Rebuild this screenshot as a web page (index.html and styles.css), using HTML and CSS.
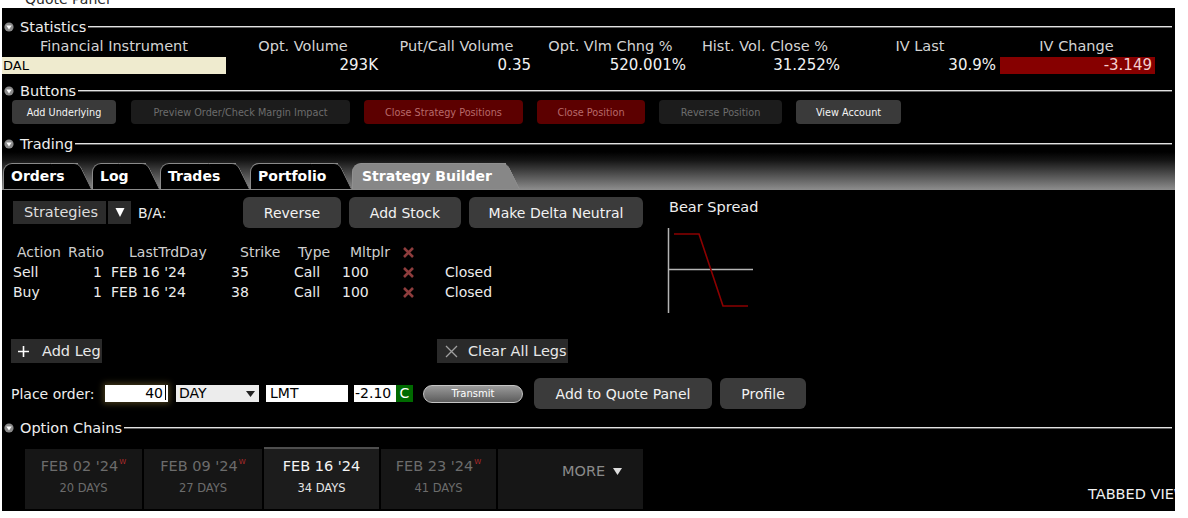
FILE: index.html
```html
<!DOCTYPE html>
<html>
<head>
<meta charset="utf-8">
<title>Quote Panel</title>
<link rel="stylesheet" href="styles.css">
</head>
<body>
<div class="title-strip"><span>Quote Panel</span></div>
<div class="panel">
  <div class="sec-head h-stats">
    <svg class="tri" viewBox="0 0 10 10"><circle cx="5" cy="5" r="4.6" fill="#8a8a8a"/><path d="M2.3 3.4H7.7L5 7.4Z" fill="#fff"/></svg>
    <span class="lbl">Statistics</span><div class="rule"></div>
  </div>
  <div class="stats">
    <div class="sh">Financial Instrument</div>
    <div class="sh">Opt. Volume</div>
    <div class="sh">Put/Call Volume</div>
    <div class="sh">Opt. Vlm Chng %</div>
    <div class="sh">Hist. Vol. Close %</div>
    <div class="sh">IV Last</div>
    <div class="sh">IV Change</div>
    <div class="sv sym">DAL</div>
    <div class="sv">293K</div>
    <div class="sv">0.35</div>
    <div class="sv">520.001%</div>
    <div class="sv">31.252%</div>
    <div class="sv">30.9%</div>
    <div class="sv neg">-3.149</div>
  </div>

  <div class="sec-head h-buttons">
    <svg class="tri" viewBox="0 0 10 10"><circle cx="5" cy="5" r="4.6" fill="#8a8a8a"/><path d="M2.3 3.4H7.7L5 7.4Z" fill="#fff"/></svg>
    <span class="lbl">Buttons</span><div class="rule"></div>
  </div>
  <div class="btnrow">
    <div class="abtn on b1">Add Underlying</div>
    <div class="abtn off b2">Preview Order/Check Margin Impact</div>
    <div class="abtn red b3">Close Strategy Positions</div>
    <div class="abtn red b4">Close Position</div>
    <div class="abtn off b5">Reverse Position</div>
    <div class="abtn on b6">View Account</div>
  </div>

  <div class="sec-head h-trading">
    <svg class="tri" viewBox="0 0 10 10"><circle cx="5" cy="5" r="4.6" fill="#8a8a8a"/><path d="M2.3 3.4H7.7L5 7.4Z" fill="#fff"/></svg>
    <span class="lbl">Trading</span><div class="rule"></div>
  </div>
  <div class="tabstrip">
    <div class="tab t1">Orders</div>
    <div class="tab t2">Log</div>
    <div class="tab t3">Trades</div>
    <div class="tab t4">Portfolio</div>
    <div class="tab t5 active">Strategy Builder</div>
  </div>

  <div class="sb-body">
    <div class="sb-left">
      <div class="toolbar">
        <div class="strat">Strategies</div>
        <div class="dd"><svg width="10" height="11" viewBox="0 0 10 11"><path d="M0.5 1H9.5L5 10Z" fill="#fff"/></svg></div>
        <div class="ba">B/A:</div>
        <div class="sbtn w-rev">Reverse</div>
        <div class="sbtn w-stock">Add Stock</div>
        <div class="sbtn w-delta">Make Delta Neutral</div>
      </div>
      <div class="legs">
        <div class="h c1">Action</div>
        <div class="h c2">Ratio</div>
        <div class="h c3">LastTrdDay</div>
        <div class="h c4">Strike</div>
        <div class="h c5">Type</div>
        <div class="h c6">Mltplr</div>
        <div class="h c7"><svg class="xr" viewBox="0 0 11 11"><path d="M1 1L10 10M10 1L1 10" stroke="#8e3d3d" stroke-width="2.6"/></svg></div>
        <div class="h c8"></div>

        <div class="v c1">Sell</div>
        <div class="v c2">1</div>
        <div class="v c3">FEB 16 '24</div>
        <div class="v c4">35</div>
        <div class="v c5">Call</div>
        <div class="v c6">100</div>
        <div class="v c7"><svg class="xr" viewBox="0 0 11 11"><path d="M1 1L10 10M10 1L1 10" stroke="#8e3d3d" stroke-width="2.6"/></svg></div>
        <div class="v c8">Closed</div>

        <div class="v c1">Buy</div>
        <div class="v c2">1</div>
        <div class="v c3">FEB 16 '24</div>
        <div class="v c4">38</div>
        <div class="v c5">Call</div>
        <div class="v c6">100</div>
        <div class="v c7"><svg class="xr" viewBox="0 0 11 11"><path d="M1 1L10 10M10 1L1 10" stroke="#8e3d3d" stroke-width="2.6"/></svg></div>
        <div class="v c8">Closed</div>
      </div>
    </div>
    <div class="sb-right">
      <div class="spread-name">Bear Spread</div>
      <svg class="graph" width="90" height="87" viewBox="0 0 90 87">
        <path d="M2.5 1V86" stroke="#b4b4b4" stroke-width="1.5" fill="none"/>
        <path d="M2 42.5H87" stroke="#b4b4b4" stroke-width="1.5" fill="none"/>
        <path d="M8 7H33L57 79H82" stroke="#8c0000" stroke-width="1.6" fill="none"/>
      </svg>
    </div>
  </div>

  <div class="legbar">
    <div class="addleg"><svg width="11" height="11" viewBox="0 0 11 11"><path d="M5.5 0V11M0 5.5H11" stroke="#fff" stroke-width="1.6"/></svg><span>Add Leg</span></div>
    <div class="clearlegs"><svg width="13" height="13" viewBox="0 0 13 13"><path d="M1 1L12 12M12 1L1 12" stroke="#a0a0a0" stroke-width="1.3"/></svg><span>Clear All Legs</span></div>
  </div>

  <div class="po">
    <div class="po-lbl">Place order:</div>
    <div class="inp qty">40<span class="caret"></span></div>
    <div class="inp day"><span>DAY</span><svg width="9" height="6" viewBox="0 0 9 6"><path d="M0 0H9L4.5 6Z" fill="#222"/></svg></div>
    <div class="inp lmt">LMT</div>
    <div class="inp px">-2.10</div>
    <div class="cbox">C</div>
    <div class="transmit">Transmit</div>
    <div class="sbtn w-aqp">Add to Quote Panel</div>
    <div class="sbtn w-prof">Profile</div>
  </div>

  <div class="sec-head h-chains">
    <svg class="tri" viewBox="0 0 10 10"><circle cx="5" cy="5" r="4.6" fill="#8a8a8a"/><path d="M2.3 3.4H7.7L5 7.4Z" fill="#fff"/></svg>
    <span class="lbl">Option Chains</span><div class="rule"></div>
  </div>
  <div class="chains">
    <div class="ct ct1"><div class="d">FEB 02 '24<sup>W</sup></div><div class="n">20 DAYS</div></div>
    <div class="ct ct2"><div class="d">FEB 09 '24<sup>W</sup></div><div class="n">27 DAYS</div></div>
    <div class="ct ct3 sel"><div class="d">FEB 16 '24</div><div class="n">34 DAYS</div></div>
    <div class="ct ct4"><div class="d">FEB 23 '24<sup>W</sup></div><div class="n">41 DAYS</div></div>
    <div class="ct more"><div class="mo">MORE <svg width="9" height="7" viewBox="0 0 9 7"><path d="M0 0H9L4.5 7Z" fill="#ddd"/></svg></div></div>
    <div class="tabbed">TABBED VIEW</div>
  </div>
</div>
</body>
</html>
```

FILE: styles.css
```css
* { box-sizing: border-box; }
html, body { margin: 0; padding: 0; background: #fff; }
body {
  font-family: "DejaVu Sans", Verdana, sans-serif;
  width: 1188px;
  height: 518px;
  overflow: hidden;
}
.title-strip { height: 8px; overflow: hidden; }
.title-strip span {
  display: block;
  margin-top: -8px;
  padding-left: 25px;
  font-size: 14px;
  line-height: 14px;
  color: #2a2a2a;
}
.panel {
  margin-left: 2px;
  width: 1173px;
  height: 503px;
  background: #000;
  overflow: hidden;
  color: #e8e8e8;
}

/* section headers */
.sec-head {
  display: flex;
  align-items: center;
  height: 16px;
  line-height: 16px;
  font-size: 14.5px;
  color: #eee;
}
.sec-head .tri { width: 10px; height: 10px; margin-left: 2px; flex: none; }
.sec-head .lbl { margin-left: 6px; white-space: nowrap; }
.sec-head .rule {
  flex: 1;
  height: 2px;
  margin: 0 3px 1px 2px;
  border-top: 1px solid #e2e2e2;
  border-bottom: 1px solid #5e5e5e;
}
.h-stats { margin-top: 11px; }
.h-buttons { margin-top: 9px; }
.h-trading { margin-top: 12px; }
.h-chains { margin-top: 11px; }

/* statistics */
.stats {
  display: grid;
  grid-template-columns: 224px 154px 153px 155px 154px 156px 157px;
  grid-template-rows: 17px 17px;
  row-gap: 2px;
  margin-top: 3px;
}
.stats .sh {
  text-align: center;
  font-size: 14.5px;
  line-height: 17px;
  color: #d4d4d4;
  white-space: nowrap;
}
.stats .sv {
  text-align: right;
  padding-right: 2px;
  font-size: 15px;
  line-height: 17px;
  color: #f2f2f2;
}
.stats .sym {
  text-align: left;
  padding-left: 1px;
  background: #efebcf;
  color: #000;
  font-size: 13px;
}
.stats .neg {
  margin-left: 2px;
  padding-right: 3px;
  background: #860000;
  color: #f4d0d0;
}

/* button row */
.btnrow {
  display: flex;
  height: 24px;
  margin-top: 1px;
  padding-left: 10px;
}
.abtn {
  height: 24px;
  border-radius: 4px;
  font-size: 9.7px;
  display: flex;
  align-items: center;
  justify-content: center;
  white-space: nowrap;
  margin-right: 14px;
  flex: none;
}
.abtn.on { background: #3a3a3a; color: #f4f4f4; }
.abtn.off { background: #1c1c1c; color: #6c6c6c; }
.abtn.red { background: #5c0000; color: #b86a6a; }
.b1 { width: 104px; margin-right: 15px; }
.b2 { width: 219px; }
.b3 { width: 159px; }
.b4 { width: 108px; }
.b5 { width: 123px; }
.b6 { width: 105px; }

/* tabs */
.tabstrip {
  height: 38px;
  display: flex;
  align-items: flex-end;
  padding-left: 1px;
  background: linear-gradient(#000 0%, #141414 22%, #8a8a8a 100%);
  border-bottom: 1px solid #8c8c8c;
}
.tab {
  position: relative;
  z-index: 1;
  flex: none;
  height: 26px;
  line-height: 26px;
  padding-left: 8px;
  font-size: 14px;
  font-weight: bold;
  color: #fff;
  white-space: nowrap;
}
.tab::before {
  content: "";
  position: absolute;
  left: 0; top: 0; bottom: 0; right: 14px;
  background: #000;
  border-top: 1px solid #8a8a8a;
  border-left: 1px solid #8a8a8a;
  border-top-left-radius: 9px;
  z-index: -1;
}
.tab::after {
  content: "";
  position: absolute;
  right: 0; top: 0; bottom: 0;
  width: 28px;
  background: #000;
  border-top: 1px solid #8a8a8a;
  border-right: 1px solid #8a8a8a;
  border-top-right-radius: 6px;
  transform: skewX(26deg);
  transform-origin: 100% 100%;
  z-index: -1;
}
.tab.active::before, .tab.active::after { background: #878787; border-color: #909090; }
.t1 { width: 89px; }
.t2 { width: 68px; }
.t3 { width: 90px; }
.t4 { width: 102px; }
.t5 { width: 168px; padding-left: 10px; }

/* strategy builder */
.sb-body { display: flex; }
.sb-left { width: 667px; flex: none; }
.toolbar {
  display: flex;
  align-items: center;
  height: 31px;
  margin-top: 7px;
  padding-left: 11px;
}
.strat {
  width: 93px;
  height: 23px;
  line-height: 23px;
  padding-left: 11px;
  background: #2c2c2c;
  font-size: 14.5px;
  color: #dedede;
}
.dd {
  width: 23px;
  height: 23px;
  margin-left: 2px;
  background: #2c2c2c;
  display: flex;
  align-items: center;
  justify-content: center;
}
.ba { width: 112px; padding-left: 7px; font-size: 14px; color: #eee; }
.sbtn {
  height: 31px;
  border-radius: 6px;
  background: #3b3b3b;
  color: #f2f2f2;
  font-size: 14px;
  display: flex;
  align-items: center;
  justify-content: center;
  white-space: nowrap;
  flex: none;
}
.w-rev { width: 98px; }
.w-stock { width: 112px; margin-left: 8px; }
.w-delta { width: 174px; margin-left: 8px; }

.legs {
  display: grid;
  grid-template-columns: 49px 43px 125px 60px 50px 60px 30px 120px;
  grid-auto-rows: 20px;
  margin-top: 14px;
  margin-left: 11px;
  font-size: 14px;
  line-height: 20px;
  white-space: nowrap;
}
.legs .h { color: #cfcfcf; }
.legs .v { color: #ececec; }
.legs .c2 { text-align: right; }
.legs .h.c1 { padding-left: 4px; }
.legs .h.c2 { padding-right: 1px; }
.legs .h.c3 { padding-left: 24px; }
.legs .h.c4 { padding-left: 10px; }
.legs .h.c5 { padding-left: 8px; }
.legs .h.c6 { padding-left: 10px; }
.legs .v.c2 { padding-right: 3px; }
.legs .v.c3 { padding-left: 6px; }
.legs .v.c4 { padding-left: 1px; }
.legs .v.c5 { padding-left: 4px; }
.legs .v.c6 { padding-left: 2px; }
.legs .c7 { padding-left: 3px; display: flex; align-items: center; }
.legs .v.c8 { padding-left: 15px; }
.xr { width: 11px; height: 11px; }

.spread-name {
  margin-top: 8px;
  height: 18px;
  line-height: 18px;
  font-size: 14.5px;
  color: #eee;
  white-space: nowrap;
}
.graph { display: block; margin-top: 11px; margin-left: -3px; }

/* legs bar */
.legbar {
  display: flex;
  height: 24px;
  margin-top: 25px;
  padding-left: 9px;
  font-size: 14.5px;
  color: #e8e8e8;
}
.addleg, .clearlegs {
  display: flex;
  align-items: center;
  height: 24px;
  background: #2a2a2a;
  white-space: nowrap;
}
.addleg { width: 91px; padding-left: 7px; }
.addleg span { margin-left: 13px; }
.clearlegs { width: 131px; margin-left: 335px; padding-left: 8px; }
.clearlegs span { margin-left: 10px; }

/* place order */
.po {
  display: flex;
  align-items: center;
  height: 31px;
  margin-top: 15px;
  padding-left: 9px;
}
.po-lbl { width: 94px; font-size: 14px; color: #eee; white-space: nowrap; }
.inp {
  height: 17px;
  line-height: 17px;
  background: #fff;
  color: #000;
  font-size: 14px;
  flex: none;
}
.qty {
  width: 63px;
  text-align: right;
  padding-right: 2px;
  box-shadow: 0 0 6px 2px rgba(190, 160, 70, 0.35);
}
.caret {
  display: inline-block;
  width: 1px;
  height: 15px;
  margin-left: 2px;
  background: #000;
  vertical-align: -2px;
}
.day {
  width: 83px;
  margin-left: 8px;
  background: #ececec;
  padding: 0 4px 0 3px;
  display: flex;
  align-items: center;
  justify-content: space-between;
}
.lmt { width: 82px; margin-left: 7px; padding-left: 4px; }
.px { width: 42px; margin-left: 6px; padding-left: 1px; }
.cbox {
  width: 17px;
  height: 17px;
  line-height: 17px;
  background: #006a00;
  color: #fff;
  font-size: 14px;
  text-align: center;
  flex: none;
}
.transmit {
  width: 100px;
  height: 18px;
  margin-left: 10px;
  border-radius: 9px;
  background: linear-gradient(#9a9a9a, #5c5c5c);
  border: 1.5px solid #c4c4c4;
  color: #fff;
  font-size: 10px;
  line-height: 15px;
  text-align: center;
  flex: none;
}
.w-aqp { width: 178px; margin-left: 11px; }
.w-prof { width: 86px; margin-left: 8px; }

/* option chains */
.chains {
  display: flex;
  align-items: flex-end;
  height: 62px;
  margin-top: 11px;
  padding-left: 23px;
}
.ct {
  height: 60px;
  background: #161616;
  margin-right: 2px;
  display: flex;
  flex-direction: column;
  align-items: center;
  flex: none;
  white-space: nowrap;
}
.ct1 { width: 117px; }
.ct2 { width: 118px; }
.ct3 { width: 115px; }
.ct4 { width: 115px; }
.ct .d { margin-top: 8px; font-size: 14.5px; line-height: 19px; color: #6c6c6c; }
.ct .d sup { font-size: 7px; color: #b02a2a; vertical-align: 7px; margin-left: 1px; line-height: 0; }
.ct .n { margin-top: 5px; font-size: 11.5px; line-height: 15px; color: #6c6c6c; }
.ct.sel { height: 62px; background: #1c1c1c; border-top: 2px solid #4e4e4e; }
.ct.sel .d { color: #f4f4f4; }
.ct.sel .n { color: #e4e4e4; }
.ct.more { width: 145px; align-items: flex-start; padding-left: 64px; }
.ct .mo { margin-top: 13px; font-size: 14.5px; line-height: 19px; color: #8a8a8a; }
.ct .mo svg { margin-left: 3px; vertical-align: 1px; }
.tabbed {
  flex: none;
  margin-left: 443px;
  margin-bottom: 6px;
  font-size: 14.5px;
  line-height: 17px;
  color: #f2f2f2;
  white-space: nowrap;
}
```
